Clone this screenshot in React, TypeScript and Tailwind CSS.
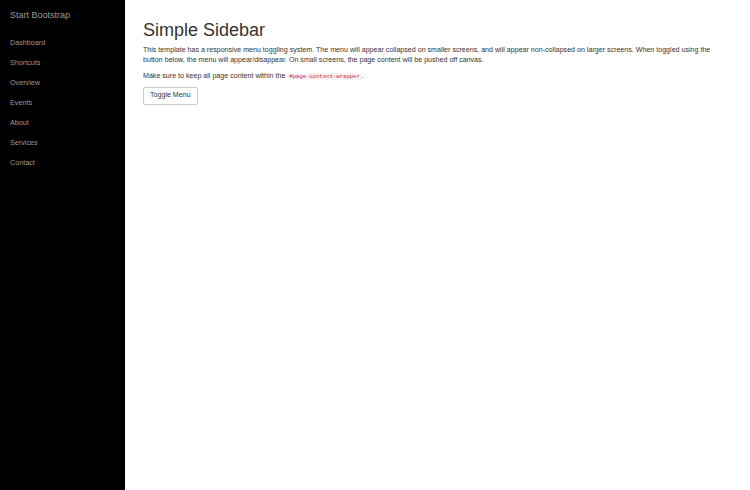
import React from 'react';

const links = ['Dashboard', 'Shortcuts', 'Overview', 'Events', 'About', 'Services', 'Contact'];

export default function App() {
  return (
    <div className="flex h-[490px] w-[750px] bg-white font-['Liberation_Sans',Arial,sans-serif]">
      <aside className="w-[125px] shrink-0 bg-black">
        <div className="flex h-[32px] items-center pl-[10px] text-[9px] text-[#999999]">Start Bootstrap</div>
        <ul className="mt-[1px]">
          {links.map((link) => (
            <li key={link} className="flex h-[20px] items-center pl-[10px] text-[7.2px] text-[#999999]">
              {link}
            </li>
          ))}
        </ul>
      </aside>

      <main className="flex-1 pl-[18px] pr-[22px] pt-[18px] text-[#333333]">
        <h1 className="text-[18px] leading-[24px] text-[#333333]">Simple Sidebar</h1>
        <p className="mt-[3px] text-[7.1px] leading-[10px]">
          This template has a responsive menu toggling system. The menu will appear collapsed on smaller screens, and will
          appear non-collapsed on larger screens. When toggled using the button below, the menu will appear/disappear. On small
          screens, the page content will be pushed off canvas.
        </p>
        <p className="mt-[6px] text-[7.1px] leading-[10px]">
          Make sure to keep all page content within the{' '}
          <code className="rounded-[2px] bg-[#f9f2f4] px-[2px] font-['Liberation_Mono',monospace] text-[5.6px] text-[#c7254e]">
            #page-content-wrapper
          </code>
          .
        </p>
        <button className="mt-[5px] block h-[18px] rounded-[2px] border border-[#cccccc] bg-white px-[6px] text-[7.1px] leading-none text-[#333333]">
          Toggle Menu
        </button>
      </main>
    </div>
  );
}
